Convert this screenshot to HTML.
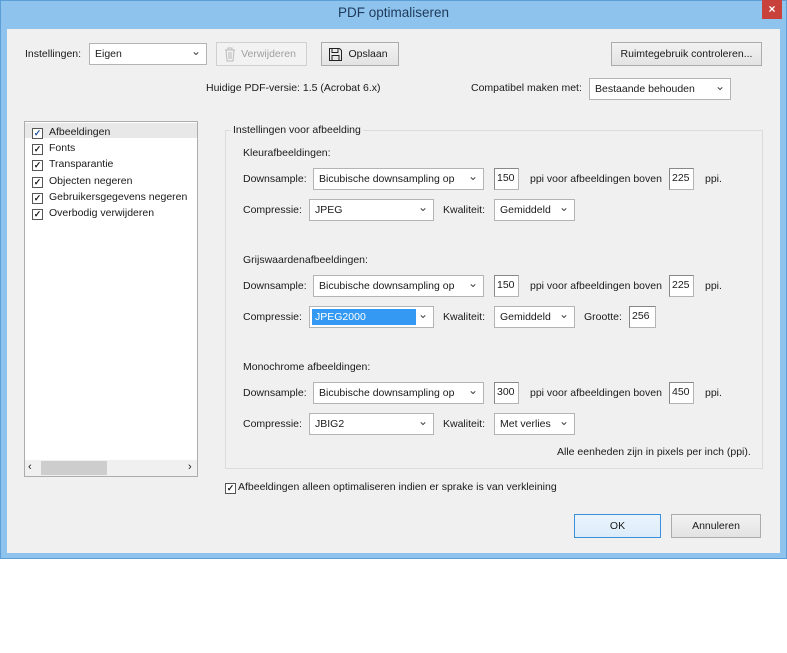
<!DOCTYPE html>
<html><head><meta charset="utf-8"><style>
*{margin:0;padding:0;box-sizing:border-box}
body{width:787px;height:653px;background:#fff;font-family:"Liberation Sans",sans-serif;font-size:10.5px;color:#1a1a1a;position:relative;overflow:hidden}
.win{position:absolute;left:0;top:0;width:787px;height:559px;background:#8ec3ee;border:1px solid #5c9fd8}
.title{position:absolute;left:0;top:5px;width:787px;text-align:center;font-size:13.5px;color:#1f3a5a}
.close{position:absolute;left:762px;top:0;width:20px;height:19px;background:#c9413b;color:#fff;text-align:center;font-size:12px;line-height:18px;font-weight:bold}
.client{position:absolute;left:7px;top:29px;width:773px;height:524px;background:#f0f0f0}
.a{position:absolute;white-space:nowrap}
.sel{position:absolute;background:#fff;border:1px solid #b4b4b4;height:22px;padding:4px 0 0 5px}
.sel::after{content:"\2304";position:absolute;right:5px;top:0px;font-size:12px;color:#444}
.inp{position:absolute;background:#fff;border:1px solid #b4b4b4;border-top-color:#888;border-left-color:#888;height:22px;padding:3px 0 0 2px}
.btn{position:absolute;border:1px solid #acacac;background:linear-gradient(#f2f2f2,#e3e3e3);height:24px;text-align:center;padding-top:5px}
.cb{display:inline-block;width:11px;height:11px;border:1px solid #555;background:#fff;font-size:9px;line-height:9px;text-align:center;vertical-align:-1px;margin-right:6px;font-weight:bold}
</style></head><body>
<div class="win"></div>
<div class="title">PDF optimaliseren</div>
<div class="close">×</div>
<div class="client"></div>

<div class="a" style="left:25px;top:48px">Instellingen:</div>
<div class="sel" style="left:89px;top:43px;width:118px">Eigen</div>
<div class="btn" style="left:216px;top:42px;width:91px;color:#a0a0a0;border-color:#d0d0d0;background:#f2f2f2;padding-left:14px">Verwijderen<svg style="position:absolute;left:6px;top:4px" width="14" height="15"><path d="M2 3h10M5 3V1h4v2M3 3l1 11h6l1-11M6 5v7M8 5v7" stroke="#bbb" fill="none"/></svg></div>
<div class="btn" style="left:321px;top:42px;width:78px;padding-left:16px">Opslaan<svg style="position:absolute;left:6px;top:4px" width="15" height="15"><path d="M1.5 1.5h10l2 2v10h-12zM4 1.5v4h6v-4M4 13.5v-5h7v5" stroke="#222" fill="none"/></svg></div>
<div class="btn" style="left:611px;top:42px;width:151px">Ruimtegebruik controleren...</div>

<div class="a" style="left:206px;top:82px">Huidige PDF-versie: 1.5 (Acrobat 6.x)</div>
<div class="a" style="left:471px;top:82px">Compatibel maken met:</div>
<div class="sel" style="left:589px;top:78px;width:142px">Bestaande behouden</div>

<div class="a" style="left:24px;top:121px;width:174px;height:356px;background:#fff;border:1px solid #acacac"></div>
<div class="a" style="left:25px;top:123px;width:172px;height:15px;background:#e8e8e8"></div>
<div class="a" style="left:32px;top:124px;line-height:16.2px"><span class="cb" style="color:#1c4f9c">✓</span>Afbeeldingen<br><span class="cb">✓</span>Fonts<br><span class="cb">✓</span>Transparantie<br><span class="cb">✓</span>Objecten negeren<br><span class="cb">✓</span>Gebruikersgegevens negeren<br><span class="cb">✓</span>Overbodig verwijderen</div>
<div class="a" style="left:25px;top:460px;width:172px;height:16px;background:#f0f0f0"></div>
<div class="a" style="left:28px;top:461px;font-size:11px">‹</div>
<div class="a" style="left:41px;top:461px;width:66px;height:14px;background:#cdcdcd"></div>
<div class="a" style="left:188px;top:461px;font-size:11px">›</div>

<div class="a" style="left:225px;top:130px;width:538px;height:339px;border:1px solid #dcdcdc"></div>
<div class="a" style="left:231px;top:124px;background:#f0f0f0;padding:0 2px">Instellingen voor afbeelding</div>

<div class="a" style="left:243px;top:147px">Kleurafbeeldingen:</div>
<div class="a" style="left:243px;top:173px">Downsample:</div>
<div class="sel" style="left:313px;top:168px;width:171px">Bicubische downsampling op</div>
<div class="inp" style="left:494px;top:168px;width:25px">150</div>
<div class="a" style="left:530px;top:173px">ppi voor afbeeldingen boven</div>
<div class="inp" style="left:669px;top:168px;width:25px">225</div>
<div class="a" style="left:705px;top:173px">ppi.</div>
<div class="a" style="left:243px;top:204px">Compressie:</div>
<div class="sel" style="left:309px;top:199px;width:125px">JPEG</div>
<div class="a" style="left:443px;top:204px">Kwaliteit:</div>
<div class="sel" style="left:494px;top:199px;width:81px">Gemiddeld</div>

<div class="a" style="left:243px;top:254px">Grijswaardenafbeeldingen:</div>
<div class="a" style="left:243px;top:280px">Downsample:</div>
<div class="sel" style="left:313px;top:275px;width:171px">Bicubische downsampling op</div>
<div class="inp" style="left:494px;top:275px;width:25px">150</div>
<div class="a" style="left:530px;top:280px">ppi voor afbeeldingen boven</div>
<div class="inp" style="left:669px;top:275px;width:25px">225</div>
<div class="a" style="left:705px;top:280px">ppi.</div>
<div class="a" style="left:243px;top:311px">Compressie:</div>
<div class="sel" style="left:309px;top:306px;width:125px;padding:2px"><div style="background:#3399f3;color:#fff;width:104px;height:16px;padding:2px 0 0 3px">JPEG2000</div></div>
<div class="a" style="left:443px;top:311px">Kwaliteit:</div>
<div class="sel" style="left:494px;top:306px;width:81px">Gemiddeld</div>
<div class="a" style="left:584px;top:311px">Grootte:</div>
<div class="inp" style="left:629px;top:306px;width:27px">256</div>

<div class="a" style="left:243px;top:361px">Monochrome afbeeldingen:</div>
<div class="a" style="left:243px;top:387px">Downsample:</div>
<div class="sel" style="left:313px;top:382px;width:171px">Bicubische downsampling op</div>
<div class="inp" style="left:494px;top:382px;width:25px">300</div>
<div class="a" style="left:530px;top:387px">ppi voor afbeeldingen boven</div>
<div class="inp" style="left:669px;top:382px;width:25px">450</div>
<div class="a" style="left:705px;top:387px">ppi.</div>
<div class="a" style="left:243px;top:418px">Compressie:</div>
<div class="sel" style="left:309px;top:413px;width:125px">JBIG2</div>
<div class="a" style="left:443px;top:418px">Kwaliteit:</div>
<div class="sel" style="left:494px;top:413px;width:81px">Met verlies</div>
<div class="a" style="left:557px;top:446px">Alle eenheden zijn in pixels per inch (ppi).</div>

<div class="a" style="left:225px;top:481px"><span class="cb" style="margin-right:2px">✓</span>Afbeeldingen alleen optimaliseren indien er sprake is van verkleining</div>

<div class="btn" style="left:574px;top:514px;width:87px;border-color:#3c8fdc;background:linear-gradient(#eaf4fc,#dbecf9)">OK</div>
<div class="btn" style="left:671px;top:514px;width:90px">Annuleren</div>
</body></html>
